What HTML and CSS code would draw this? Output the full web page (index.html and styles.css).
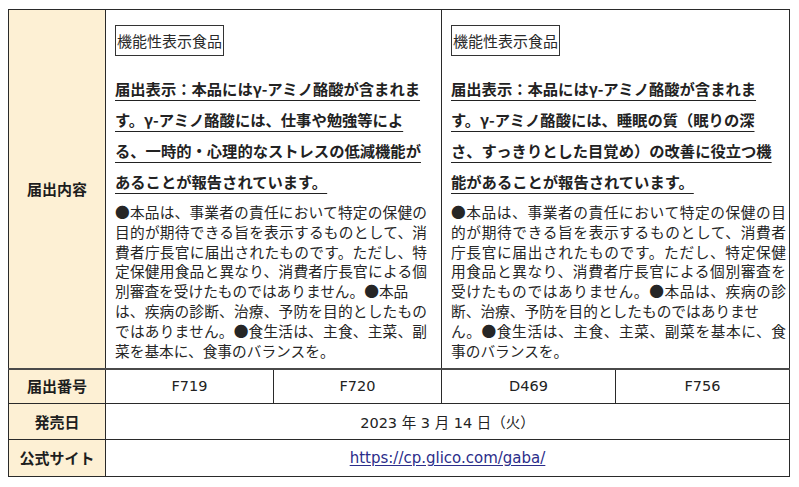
FILE: index.html
```html
<!DOCTYPE html>
<html lang="ja">
<head>
<meta charset="utf-8">
<title>GABA 届出情報</title>
<link rel="stylesheet" href="styles.css">
</head>
<body>
<table class="spec">
  <colgroup>
    <col class="c-head">
    <col class="c-a">
    <col class="c-b">
    <col class="c-c">
    <col class="c-d">
  </colgroup>
  <tr class="r-content">
    <th>届出内容</th>
    <td colspan="2" class="content left">
      <div class="tag">機能性表示食品</div>
      <p class="claim"><span>届出表示：本品にはγ-アミノ酪酸が含まれま<br>す。γ-アミノ酪酸には、仕事や勉強等によ<br>る、一時的・心理的なストレスの低減機能が<br>あることが報告されています。</span></p>
      <div class="note">
        <span class="ln">●本品は、事業者の責任において特定の保健の</span>
        <span class="ln">目的が期待できる旨を表示するものとして、消</span>
        <span class="ln">費者庁長官に届出されたものです。ただし、特</span>
        <span class="ln">定保健用食品と異なり、消費者庁長官による個</span>
        <span class="ln short">別審査を受けたものではありません。●本品</span>
        <span class="ln">は、疾病の診断、治療、予防を目的としたもの</span>
        <span class="ln">ではありません。●食生活は、主食、主菜、副</span>
        <span class="ln short">菜を基本に、食事のバランスを。</span>
      </div>
    </td>
    <td colspan="2" class="content right">
      <div class="tag">機能性表示食品</div>
      <p class="claim"><span>届出表示：本品にはγ-アミノ酪酸が含まれま<br>す。γ-アミノ酪酸には、睡眠の質（眠りの深<br>さ、すっきりとした目覚め）の改善に役立つ機<br>能があることが報告されています。</span></p>
      <div class="note">
        <span class="ln">●本品は、事業者の責任において特定の保健の目</span>
        <span class="ln">的が期待できる旨を表示するものとして、消費者</span>
        <span class="ln">庁長官に届出されたものです。ただし、特定保健</span>
        <span class="ln">用食品と異なり、消費者庁長官による個別審査を</span>
        <span class="ln">受けたものではありません。●本品は、疾病の診</span>
        <span class="ln short">断、治療、予防を目的としたものではありませ</span>
        <span class="ln">ん。●食生活は、主食、主菜、副菜を基本に、食</span>
        <span class="ln short">事のバランスを。</span>
      </div>
    </td>
  </tr>
  <tr class="r-num">
    <th>届出番号</th>
    <td class="val">F719</td>
    <td class="val">F720</td>
    <td class="val">D469</td>
    <td class="val">F756</td>
  </tr>
  <tr class="r-date">
    <th>発売日</th>
    <td colspan="4" class="val">2023 年 3 月 14 日（火）</td>
  </tr>
  <tr class="r-site">
    <th>公式サイト</th>
    <td colspan="4" class="val"><a class="link" href="https://cp.glico.com/gaba/">https://cp.glico.com/gaba/</a></td>
  </tr>
</table>
</body>
</html>
```

FILE: styles.css
```css
html, body {
  background: #ffffff;
}

body {
  margin: 9px 0 0 8px;
  font-family: "Noto Sans CJK JP", sans-serif;
  color: #222222;
}

.spec {
  border-collapse: collapse;
  table-layout: fixed;
  width: 781px;
}

.c-head { width: 97px; }
.c-a { width: 168px; }
.c-b { width: 168px; }
.c-c { width: 174px; }
.c-d { width: 174px; }

.spec th,
.spec td {
  border: 1px solid #2a2a2a;
  padding: 0;
}

.spec th {
  background: #fdf0d4;
  font-weight: bold;
  font-size: 15px;
  line-height: 20px;
  text-align: center;
  vertical-align: middle;
  color: #1e1e1e;
}

.r-content { height: 359px; }
.r-num { height: 35px; }
.r-date { height: 36px; }
.r-site { height: 37px; }

.r-content th,
.r-content td {
  border-bottom: 2px solid #4a4a4a;
}

.content {
  vertical-align: top;
}

.spec td.left {
  padding: 15px 14px 0 9px;
}

.spec td.right {
  padding: 15px 3px 0 9px;
}

.tag {
  display: inline-block;
  border: 1px solid #333333;
  padding: 0 1px 0 1px;
  font-size: 15px;
  line-height: 29px;
  color: #2a2a2a;
}

.claim {
  margin: 17px 0 0 0;
  font-size: 15.3px;
  font-weight: bold;
  line-height: 31px;
  color: #222222;
}

.claim span {
  text-decoration: underline;
  text-decoration-thickness: 1px;
  text-underline-offset: 5px;
}

.note {
  margin-top: 5px;
  font-size: 14.7px;
  line-height: 19.8px;
  color: #262626;
}

.ln {
  display: block;
  text-align: justify;
  text-align-last: justify;
  white-space: nowrap;
}

.ln.short {
  text-align-last: left;
}

.val {
  text-align: center;
  vertical-align: middle;
  font-family: "DejaVu Sans", "Noto Sans CJK JP", sans-serif;
  font-size: 14.5px;
  color: #222222;
}

.link {
  color: #2b2d8a;
  text-decoration: underline;
  text-underline-offset: 2px;
  font-size: 15px;
}
```
